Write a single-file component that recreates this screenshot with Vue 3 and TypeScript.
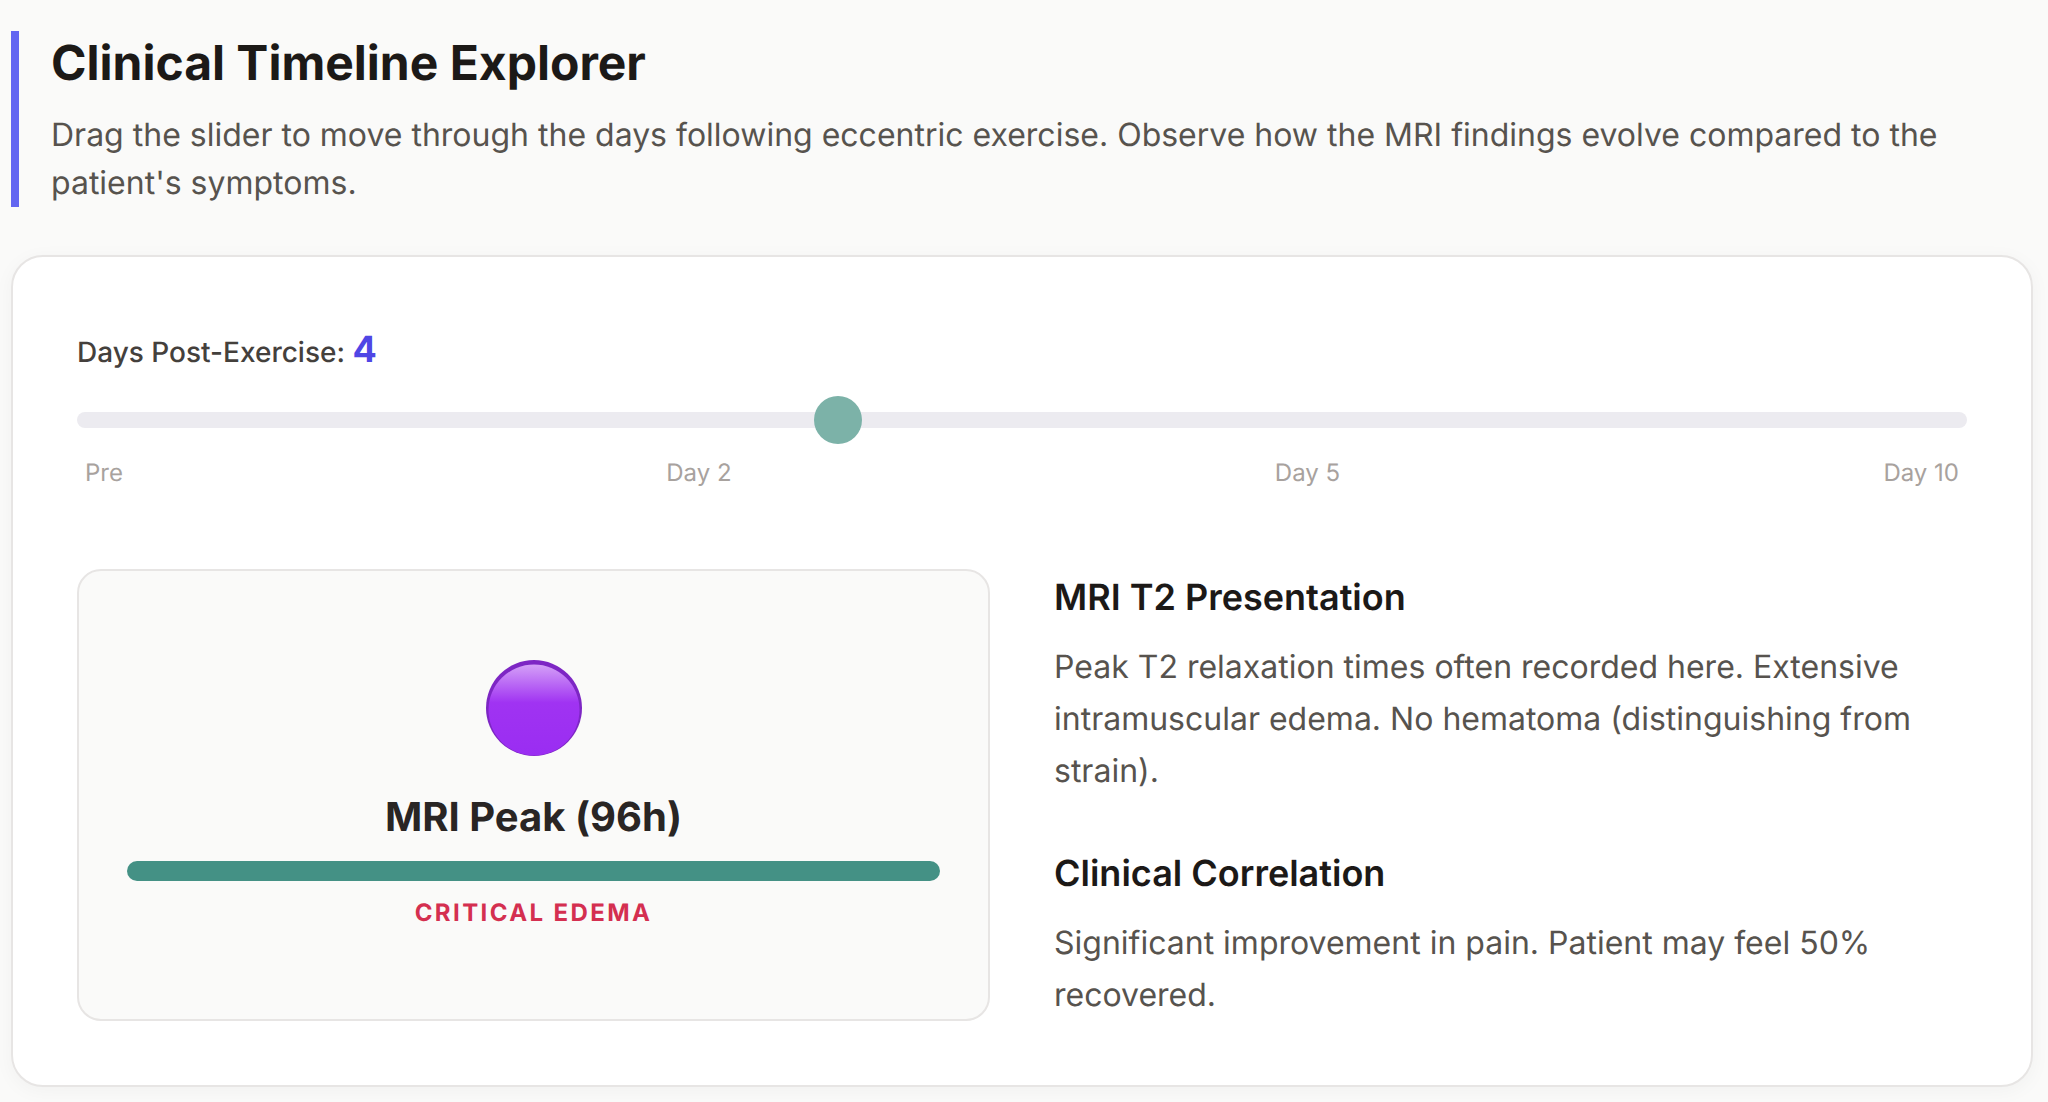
<script setup lang="ts">
import { ref } from 'vue'

const days = ref(4)
const ticks = ['Pre', 'Day 2', 'Day 5', 'Day 10']
</script>

<template>
  <main class="page">
    <header class="intro">
      <h1>Clinical Timeline Explorer</h1>
      <p>Drag the slider to move through the days following eccentric exercise. Observe how the MRI findings evolve compared to the patient's symptoms.</p>
    </header>

    <section class="card">
      <div class="slider-block">
        <label class="slider-label" for="days">
          Days Post-Exercise:
          <span class="day-value">{{ days }}</span>
        </label>
        <input id="days" v-model.number="days" class="slider" type="range" min="0" max="10" step="1" />
        <div class="ticks">
          <span v-for="tick in ticks" :key="tick">{{ tick }}</span>
        </div>
      </div>

      <div class="details">
        <div class="status-panel">
          <svg class="status-icon" viewBox="0 0 96 96" aria-hidden="true">
            <defs>
              <linearGradient id="orb-shine" x1="0" y1="0" x2="0" y2="1">
                <stop offset="0" stop-color="#d4a0f7" />
                <stop offset="0.42" stop-color="#a033f2" />
                <stop offset="1" stop-color="#9a2df2" />
              </linearGradient>
            </defs>
            <circle cx="48" cy="48" r="48" fill="#7d26c4" />
            <circle cx="48" cy="50" r="45.5" fill="url(#orb-shine)" />
          </svg>
          <div class="status-title">MRI Peak (96h)</div>
          <div class="status-bar"></div>
          <div class="status-note">CRITICAL EDEMA</div>
        </div>

        <div class="notes">
          <div class="note">
            <h3>MRI T2 Presentation</h3>
            <p>Peak T2 relaxation times often recorded here. Extensive intramuscular edema. No hematoma (distinguishing from strain).</p>
          </div>
          <div class="note">
            <h3>Clinical Correlation</h3>
            <p>Significant improvement in pain. Patient may feel 50% recovered.</p>
          </div>
        </div>
      </div>
    </section>
  </main>
</template>

<style>
html,
body {
  margin: 0;
  background: #fafaf9;
}
</style>

<style scoped>
.page {
  box-sizing: border-box;
  min-height: 1102px;
  padding: 31px 15px 16px 11px;
  font-family: Inter, "Noto Sans", sans-serif;
  color: #1c1917;
  text-rendering: geometricPrecision;
}

.intro {
  border-left: 8px solid #6366f1;
  padding-left: 32px;
  margin-bottom: 48px;
}

.intro h1 {
  margin: 0 0 16px;
  font-size: 48px;
  line-height: 64px;
  font-weight: 700;
  color: #1c1917;
}

.intro p {
  margin: 0;
  font-size: 32px;
  line-height: 48px;
  color: #57534e;
}

.card {
  background: #fff;
  border: 2px solid #e7e5e4;
  border-radius: 32px;
  padding: 64px;
  box-shadow: 0 4px 20px rgba(0, 0, 0, 0.04);
}

.slider-block {
  margin-bottom: 80px;
}

.slider-label {
  display: block;
  font-size: 28px;
  line-height: 56px;
  font-weight: 500;
  color: #44403c;
}

.day-value {
  font-size: 36px;
  font-weight: 700;
  color: #4f46e5;
}

.slider {
  display: block;
  width: 100%;
  height: 48px;
  margin: 16px 0 0;
  background: transparent;
  appearance: none;
  -webkit-appearance: none;
  cursor: pointer;
}

.slider::-webkit-slider-runnable-track {
  height: 16px;
  background: #ecebf0;
  border-radius: 8px;
}

.slider::-webkit-slider-thumb {
  -webkit-appearance: none;
  width: 48px;
  height: 48px;
  margin-top: -16px;
  background: #7cb2a8;
  border-radius: 50%;
}

.ticks {
  display: flex;
  justify-content: space-between;
  padding: 0 8px;
  margin-top: 13px;
  font-size: 24px;
  line-height: 32px;
  color: #a8a29e;
}

.details {
  display: grid;
  grid-template-columns: 1fr 1fr;
  gap: 64px;
}

.status-panel {
  display: flex;
  flex-direction: column;
  align-items: center;
  justify-content: center;
  background: #fafaf9;
  border: 2px solid #e7e5e4;
  border-radius: 24px;
  padding: 46px 48px 48px;
}

.status-icon {
  width: 96px;
  height: 96px;
  margin-bottom: 31px;
}

.status-title {
  font-size: 40px;
  line-height: 60px;
  font-weight: 700;
  color: #292524;
}

.status-bar {
  width: 100%;
  height: 20px;
  margin-top: 14px;
  background: #449185;
  border-radius: 10px;
}

.status-note {
  margin-top: 16px;
  font-size: 24px;
  line-height: 32px;
  font-weight: 700;
  letter-spacing: 2.4px;
  color: #d42f50;
}

.note + .note {
  margin-top: 48px;
}

.note h3 {
  margin: 0 0 16px;
  font-size: 36px;
  line-height: 56px;
  font-weight: 600;
  color: #1c1917;
}

.note p {
  margin: 0;
  font-size: 32px;
  line-height: 52px;
  color: #57534e;
}
</style>
